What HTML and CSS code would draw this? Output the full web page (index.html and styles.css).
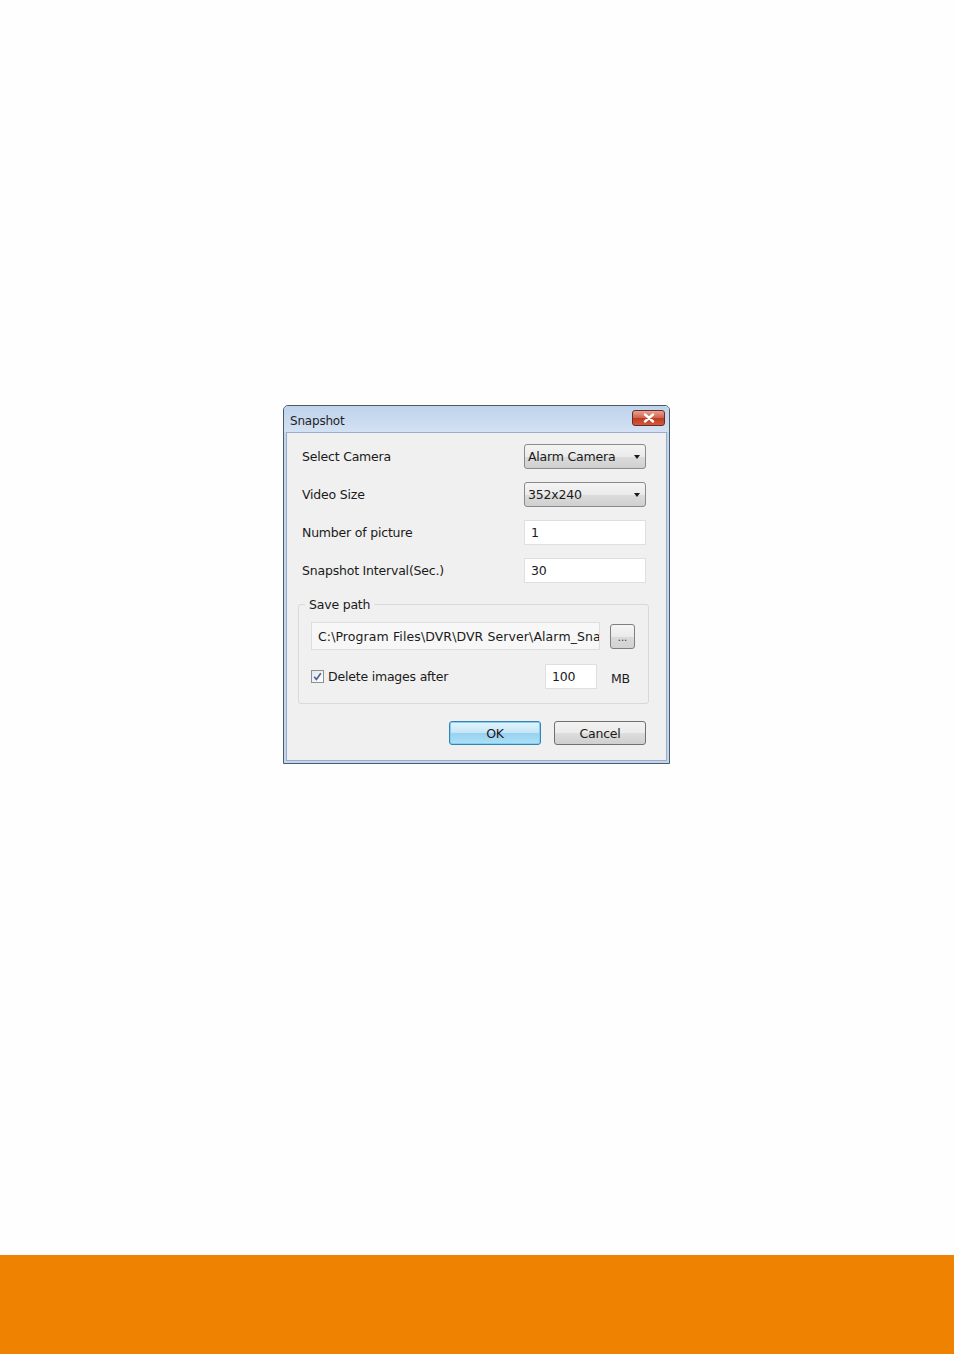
FILE: index.html
```html
<!DOCTYPE html>
<html>
<head>
<meta charset="utf-8">
<link rel="stylesheet" href="styles.css">
</head>
<body>
<div class="page">
  <div class="dialog">
    <div class="titlebar">
      <span class="title">Snapshot</span>
      <span class="close"><svg width="12" height="10" viewBox="0 0 12 10"><path d="M2 1.5 L10 8.5 M10 1.5 L2 8.5" stroke="#fff" stroke-width="2.4" stroke-linecap="round"/></svg></span>
    </div>
    <div class="body">
      <div class="row">
        <span class="lbl">Select Camera</span>
        <div class="combo"><span>Alarm Camera</span><span class="arrow"></span></div>
      </div>
      <div class="row">
        <span class="lbl">Video Size</span>
        <div class="combo"><span>352x240</span><span class="arrow"></span></div>
      </div>
      <div class="row">
        <span class="lbl">Number of picture</span>
        <div class="edit">1</div>
      </div>
      <div class="row">
        <span class="lbl">Snapshot Interval(Sec.)</span>
        <div class="edit">30</div>
      </div>
      <fieldset class="group">
        <legend>Save path</legend>
        <div class="pathrow">
          <div class="path"><span>C:\Program Files\DVR\DVR Server\Alarm_Sna</span></div>
          <div class="browse">...</div>
        </div>
        <div class="delrow">
          <span class="check"><svg width="9" height="9" viewBox="0 0 9 9"><path d="M1.2 4.8 L3.4 7.4 L7.8 1.2" stroke="#4a5f8c" stroke-width="1.6" fill="none"/></svg></span>
          <span class="dellbl">Delete images after</span>
          <div class="edit small">100</div>
          <span class="mb">MB</span>
        </div>
      </fieldset>
      <div class="buttons">
        <div class="btn ok">OK</div>
        <div class="btn">Cancel</div>
      </div>
    </div>
  </div>
  <div class="footer"></div>
</div>
</body>
</html>
```
FILE: styles.css
```css
html, body { margin: 0; padding: 0; }
body { background: #fefefe; font-family: "DejaVu Sans", sans-serif; }
.page { height: 1354px; display: flex; flex-direction: column; }
.dialog {
  margin: 405px 0 0 283px;
  border: 1px solid #4d5a67;
  border-radius: 5px 5px 0 0;
  background: #c3d6ed;
  display: flex; flex-direction: column;
  padding: 0 2px 2px 2px;
  box-sizing: border-box;
  width: 387px; height: 359px;
}
.titlebar {
  height: 26px; flex: none;
  display: flex; align-items: center; justify-content: space-between;
  background: linear-gradient(#bed3ec, #d3e1f3);
  margin: 0 -2px; padding: 0 4px 0 6px;
  border-radius: 4px 4px 0 0;
}
.title { font-size: 12px; color: #1e1e1e; letter-spacing: -0.2px; margin-top: 3px; }
.close {
  width: 33px; height: 16px; margin-top: -2px;
  border: 1px solid #6d2a22; border-radius: 3px;
  background: linear-gradient(#e7a291, #d0614b 50%, #bf3b22 51%, #d05a3c);
  display: flex; align-items: center; justify-content: center;
  box-sizing: border-box;
}
.body {
  flex: 1; background: #f0f0f0;
  border: 1px solid #98aec8;
  padding: 11px 20px 0 15px;
  display: flex; flex-direction: column;
}
.row { display: flex; align-items: center; justify-content: space-between; height: 25px; margin-bottom: 13px; }
.lbl, .dellbl, .mb, legend, .combo, .edit, .path, .btn { font-size: 12.5px; color: #1a1a1a; letter-spacing: -0.2px; }
.combo {
  width: 122px; height: 25px; box-sizing: border-box;
  border: 1px solid #8a8a8a; border-radius: 3px;
  background: linear-gradient(#f4f4f4, #ebebeb 50%, #dcdcdc 51%, #cfcfcf);
  display: flex; align-items: center; justify-content: space-between;
  padding: 0 5px 0 3px;
}
.arrow { width: 0; height: 0; border-left: 3.5px solid transparent; border-right: 3.5px solid transparent; border-top: 4px solid #1a1a1a; }
.edit {
  width: 122px; height: 25px; box-sizing: border-box;
  border: 1px solid #dfdfdf; background: #fff;
  display: flex; align-items: center; padding-left: 6px;
}
.group {
  margin: 1px -3px 0 -4px; padding: 8px 13px 10px 12px;
  border: 1px solid #d9d9d9; border-radius: 3px;
  height: 107px; box-sizing: border-box;
}
legend { padding: 0 4px; margin-left: -6px; }
.pathrow { display: flex; align-items: center; gap: 10px; margin-top: 2px; }
.path {
  width: 289px; height: 28px; box-sizing: border-box;
  border: 1px solid #dedede; background: #f7f7f7;
  display: flex; align-items: center; padding-left: 6px; padding-right: 2px;
  white-space: nowrap; overflow: hidden; letter-spacing: 0.1px;
}
.browse {
  width: 25px; height: 25px; box-sizing: border-box;
  border: 1px solid #7f7f7f; border-radius: 3px;
  background: linear-gradient(#f5f5f5, #eaeaea 50%, #dadada 51%, #d2d2d2);
  font-size: 10px; color: #333; display: flex; align-items: flex-end; justify-content: center; padding-bottom: 5px;
}
.delrow { display: flex; align-items: center; margin-top: 14px; }
.check {
  width: 13px; height: 13px; box-sizing: border-box;
  border: 1px solid #8f8f8f; background: linear-gradient(135deg, #dfe6ee, #ffffff);
  display: flex; align-items: center; justify-content: center;
  margin-right: 4px;
}
.dellbl { flex: 1; }
.edit.small { width: 52px; }
.mb { margin-left: 14px; margin-right: 5px; margin-top: 3px; }
.buttons { display: flex; justify-content: flex-end; gap: 13px; margin-top: 17px; }
.btn {
  width: 92px; height: 24px; box-sizing: border-box;
  border: 1px solid #707070; border-radius: 3px;
  background: linear-gradient(#f2f2f2, #ebebeb 50%, #dddddd 51%, #cfcfcf);
  display: flex; align-items: center; justify-content: center;
}
.btn.ok {
  border-color: #3c7fb1;
  background: linear-gradient(#e5f4fc, #c4e5f6 50%, #98d1ef 51%, #aee0f6);
  box-shadow: inset 0 0 0 1px #7ad3f6;
}
.footer { margin-top: auto; height: 99px; background: #ef8200; }
```
